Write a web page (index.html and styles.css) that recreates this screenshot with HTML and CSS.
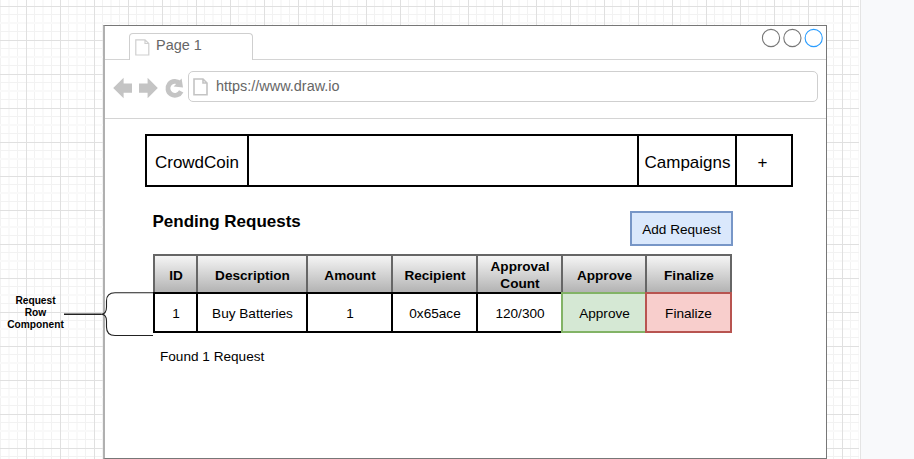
FILE: index.html
```html
<!DOCTYPE html>
<html lang="en">
<head>
<meta charset="utf-8">
<title>Pending Requests</title>
<link rel="stylesheet" href="styles.css">
</head>
<body>
<div class="sheet">
  <aside class="note">Request<br>Row<br>Component</aside>
  <main class="window">
    <header class="tabs">
      <div class="tab">
        <svg class="tab-icon" width="15" height="17" viewBox="0 0 15 17"><path d="M.8.8H10L13.8 4.5V16H.8ZM10 .8V4.5H13.8" fill="none" stroke="#cfcfcf" stroke-width="1.2"/></svg>
        <span>Page 1</span>
      </div>
      <svg class="controls" width="64" height="22" viewBox="0 0 64 22" fill="#fff" stroke="#777" stroke-width="1.1"><circle cx="11" cy="11" r="8.6"/><circle cx="32.4" cy="11" r="8.6"/><circle cx="53.7" cy="11" r="8.6" stroke="#2a9dff"/></svg>
    </header>
    <div class="toolbar">
      <svg class="nav-icons" width="72" height="22" viewBox="0 0 72 22"><path d="M.2 11 10.6.7V6.5H19V15.7H10.6V21.3ZM44.8 11 34.6.7V6.5H26V15.7H34.6V21.3Z" fill="#c4c4c4"/><path d="M66.8 6.3A7 7 0 1 0 68.2 14.4" fill="none" stroke="#c4c4c4" stroke-width="4.8"/><path d="M68.6 1.6L70 10.6L60.6 9.6Z" fill="#c4c4c4"/></svg>
      <div class="address">
        <svg width="15" height="18" viewBox="0 0 15 18"><path d="M1 1H10L14 5V16.8H1ZM10 1V5H14" fill="none" stroke="#c4c4c4" stroke-width="1.6"/></svg>
        <span>https://www.draw.io</span>
      </div>
    </div>
    <section class="page">
      <nav class="navbar">
        <div class="brand">CrowdCoin</div>
        <div class="gap"></div>
        <div class="campaigns">Campaigns</div>
        <div class="plus">+</div>
      </nav>
      <div class="heading">
        <h1>Pending Requests</h1>
        <button class="add">Add Request</button>
      </div>
      <div class="table">
        <div class="cell head">ID</div>
        <div class="cell head">Description</div>
        <div class="cell head">Amount</div>
        <div class="cell head">Recipient</div>
        <div class="cell head">Approval<br>Count</div>
        <div class="cell head">Approve</div>
        <div class="cell head">Finalize</div>
        <div class="cell">1</div>
        <div class="cell">Buy Batteries</div>
        <div class="cell">1</div>
        <div class="cell">0x65ace</div>
        <div class="cell">120/300</div>
        <div class="cell approve">Approve</div>
        <div class="cell finalize">Finalize</div>
      </div>
      <p class="found">Found 1 Request</p>
    </section>
  </main>
  <svg class="brace" width="92" height="46" viewBox="0 0 92 46" fill="none" stroke="#222"><path d="M0 23.3H37" stroke-width="1.5"/><path d="M89 1.8H51Q42.5 1.8 42.5 10V16Q42.5 23.3 37 23.3Q42.5 23.3 42.5 30V36Q42.5 44.5 51 44.5H89" stroke-width="1.1"/></svg>
</div>
</body>
</html>
```

FILE: styles.css
```css
* { box-sizing: border-box; }
body {
  margin: 0;
  height: 459px;
  overflow: hidden;
  background: #f8f9fb;
  font-family: "Liberation Sans", Arial, sans-serif;
  color: #000;
}
.sheet {
  position: relative;
  display: flex;
  width: 861px;
  height: 459px;
  padding-top: 25px;
  border-right: 1px solid #e4e4e4;
  background:
    linear-gradient(#fff, #fff) 859px 0 / 2px 100% no-repeat,
    linear-gradient(#e0e0e0 1px, transparent 1px) 0 6px / 34px 34px,
    linear-gradient(90deg, #e0e0e0 1px, transparent 1px) 26px 0 / 34px 34px,
    linear-gradient(#f2f2f2 1px, transparent 1px) 0 14px / 34px 34px,
    linear-gradient(#f9f9f9 2px, transparent 2px) 0 22px / 34px 34px,
    linear-gradient(#f2f2f2 1px, transparent 1px) 0 31px / 34px 34px,
    linear-gradient(90deg, #f2f2f2 1px, transparent 1px) 34px 0 / 34px 34px,
    linear-gradient(90deg, #f9f9f9 2px, transparent 2px) 42px 0 / 34px 34px,
    linear-gradient(90deg, #f2f2f2 1px, transparent 1px) 51px 0 / 34px 34px,
    #fff;
}
.note {
  width: 103px;
  padding: 270px 32px 0 0;
  font-size: 10.2px;
  font-weight: bold;
  line-height: 12.24px;
  text-align: center;
}
.window {
  width: 724px;
  height: 434px;
  background: #fff;
  border: 1px solid #777;
  border-left: 2px solid #b0b0b0;
}
.tabs {
  display: flex;
  justify-content: space-between;
  height: 34px;
  padding: 7px 2px 0 24px;
  border-bottom: 1px solid #d4d4d4;
  color: #666;
}
.tab {
  display: flex;
  width: 124px;
  height: 27px;
  padding: 0 0 3px 5px;
  border: 1px solid #cfcfcf;
  border-bottom: 0;
  border-radius: 4px 4px 0 0;
  background: #fff;
  font-size: 14.45px;
  line-height: 22px;
}
.tab-icon { margin: 5px 6px 0 0; }
.controls { margin-top: -6px; }
.toolbar {
  display: flex;
  height: 59px;
  padding: 11px 8px 0 8px;
  border-bottom: 1px solid #d4d4d4;
}
.nav-icons { margin: 6px 3px 0 0; }
.address {
  display: flex;
  flex: 1;
  height: 31px;
  padding: 7px 0 0 4px;
  border: 1px solid #cfcfcf;
  border-radius: 5px;
  color: #666;
  font-size: 14.45px;
  line-height: 17px;
}
.address svg { margin-top: -1px; }
.address span { margin: -1px 0 0 8px; }
.page { padding: 15px 33px 0 40px; }
.navbar {
  display: flex;
  height: 53px;
  border: 2px solid #000;
  font-size: 17px;
}
.navbar div {
  display: flex;
  align-items: center;
  justify-content: center;
  padding-top: 5px;
  border-right: 2px solid #000;
}
.navbar .brand { width: 102px; }
.navbar .gap { flex: 1; }
.navbar .campaigns { width: 98px; }
.navbar .plus { width: 54px; padding-right: 3px; border: 0; }
.navbar .campaigns { padding-left: 1px; }
.heading {
  display: flex;
  justify-content: space-between;
  padding: 24px 60px 0 7.5px;
}
h1 { margin: 1px 0 0; font-size: 17px; line-height: 20px; }
.add {
  width: 103px;
  height: 35px;
  padding: 1px 0 0;
  border: 2px solid #7796c7;
  background: #dae8fc;
  color: #000;
  font: 13.6px "Liberation Sans", Arial, sans-serif;
}
.table {
  display: grid;
  grid-template-columns: 43px 110px 85px 85px 85px 84px 85px;
  grid-template-rows: 38px 39px;
  margin: 8px 0 0 8px;
  font-size: 13.6px;
  line-height: 17px;
}
.cell {
  display: flex;
  align-items: center;
  justify-content: center;
  margin: 0 -2px -2px 0;
  padding: 2px 0 0 1px;
  border: 2px solid #000;
  background: #fff;
  text-align: center;
}
.head {
  border-color: #666;
  background: linear-gradient(#f5f5f5, #b3b3b3);
  font-weight: bold;
}
.approve { border-color: #82b366; background: #d5e8d4; }
.finalize { border-color: #b85450; background: #f8cecc; padding-left: 0; }
.found { margin: 18px 0 0 15px; font-size: 13.6px; line-height: 16px; }
.brace { position: absolute; left: 64px; top: 291px; }
```
